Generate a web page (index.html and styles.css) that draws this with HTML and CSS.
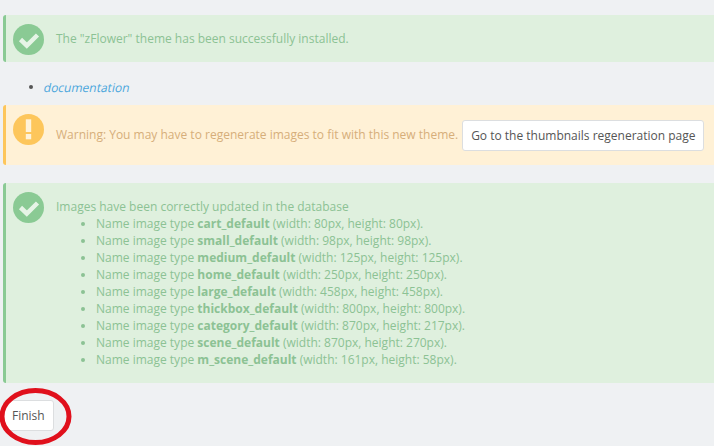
FILE: index.html
```html
<!DOCTYPE html>
<html lang="en">
<head>
<meta charset="utf-8">
<title>Theme installed</title>
<link rel="stylesheet" href="styles.css">
</head>
<body>
<main class="page">
  <div class="alert success single">
    <svg class="icon" viewBox="0 0 31 31"><circle cx="15.5" cy="15.5" r="15.5" fill="#8aca94"/><path d="M7.5 15.500l6.300 6L24.500 11" fill="none" stroke="#e6f4e6" stroke-width="4.500"/></svg>
    <p class="msg">The "zFlower" theme has been successfully installed.</p>
  </div>
  <ul class="docs"><li><a href="#">documentation</a></li></ul>
  <div class="alert warning">
    <svg class="icon" viewBox="0 0 31 31"><circle cx="15.5" cy="15.5" r="15.5" fill="#fdc65b"/><rect x="12.800" y="5.300" width="5.400" height="12.700" fill="#fff3d9"/><rect x="12.800" y="20" width="5.400" height="5.300" fill="#fff3d9"/></svg>
    <p class="msg">Warning: You may have to regenerate images to fit with this new theme.</p>
    <a class="btn regen" href="#">Go to the thumbnails regeneration page</a>
  </div>
  <div class="alert success list">
    <svg class="icon" viewBox="0 0 31 31"><circle cx="15.5" cy="15.5" r="15.5" fill="#8aca94"/><path d="M7.5 15.500l6.300 6L24.500 11" fill="none" stroke="#e6f4e6" stroke-width="4.500"/></svg>
    <div class="msg">
      <div>Images have been correctly updated in the database</div>
      <ul class="types">
        <li>Name image type <b>cart_default</b> (width: 80px, height: 80px).</li>
        <li>Name image type <b>small_default</b> (width: 98px, height: 98px).</li>
        <li>Name image type <b>medium_default</b> (width: 125px, height: 125px).</li>
        <li>Name image type <b>home_default</b> (width: 250px, height: 250px).</li>
        <li>Name image type <b>large_default</b> (width: 458px, height: 458px).</li>
        <li>Name image type <b>thickbox_default</b> (width: 800px, height: 800px).</li>
        <li>Name image type <b>category_default</b> (width: 870px, height: 217px).</li>
        <li>Name image type <b>scene_default</b> (width: 870px, height: 270px).</li>
        <li>Name image type <b>m_scene_default</b> (width: 161px, height: 58px).</li>
      </ul>
    </div>
  </div>
  <a class="btn finish" href="#">Finish</a>
</main>
<svg class="circle" viewBox="0 0 76 66"><ellipse cx="35.500" cy="33.500" rx="33.500" ry="26" fill="none" stroke="#e0101c" stroke-width="5"/></svg>
</body>
</html>
```
FILE: styles.css
```css
html, body { margin: 0; padding: 0; }
body {
  width: 714px;
  height: 446px;
  overflow: hidden;
  position: relative;
  background: #eff1f3;
  font-family: "Open Sans", sans-serif;
  font-size: 12px;
  color: #555;
}
.page { padding: 15px 0 0 3px; display: flex; flex-direction: column; align-items: stretch; }
.alert {
  display: flex;
  box-sizing: border-box;
  border-left: 3px solid;
  border-radius: 3px 0 0 3px;
  padding-left: 7px;
  line-height: 17px;
}
.success { background: #dff0de; border-color: #8aca94; color: #8cc294; }
.warning { background: #fff1d6; border-color: #fdc65b; color: #d6ae7a; height: 60px; align-items: flex-start; }
.icon { width: 31px; height: 31px; flex: none; margin-top: 9px; }
.msg { margin: 0 0 0 12px; }
.single { height: 47px; }
.single .msg { margin-top: 15px; }
.docs { margin: 0; padding: 17px 0 0 41px; height: 26px; line-height: 17px; list-style: none; }
.docs li { position: relative; }
.docs li::before {
  content: "";
  position: absolute;
  left: -15px;
  top: 6px;
  width: 4px;
  height: 4px;
  border-radius: 50%;
  background: #555;
}
.docs a { display: inline-block; color: #4aa6dc; text-decoration: none; transform: skewX(-12deg); }
.warning .msg { margin-top: 21px; white-space: nowrap; }
.btn {
  background: #fff;
  border: 1px solid #dcdee0;
  border-radius: 3px;
  color: #555;
  text-decoration: none;
  box-sizing: border-box;
  line-height: 17px;
}
.regen { margin: 15px 0 0 4px; padding: 6px 7px 6px 8px; height: 31px; white-space: nowrap; }
.list { margin-top: 18px; height: 200px; }
.list .msg { margin-top: 15px; }
.types { margin: 0; padding: 0 0 0 40px; }
b { font-weight: 700; }
.finish { align-self: flex-start; margin-top: 17px; padding: 6px 8px; height: 31px; }
.circle { position: absolute; left: 0; top: 383px; width: 76px; height: 66px; }
```
